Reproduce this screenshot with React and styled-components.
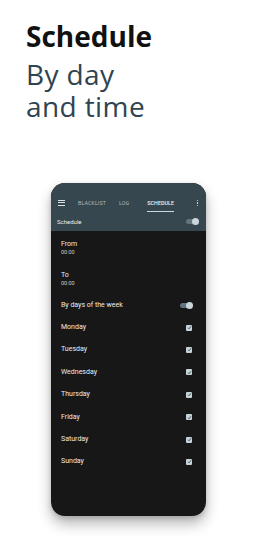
import React from 'react'
import styled, { createGlobalStyle } from 'styled-components'

const GlobalStyle = createGlobalStyle`
    html, body {
        margin:0;
        padding:0;
        background:#ffffff;
    }
    body {
        font-family: Roboto, "Noto Sans", sans-serif;
    }
`;

const Page = styled.div`
    width:256px;
    height:554px;
    overflow:hidden;
    background:#ffffff;
    display:flex;
    flex-direction:column;
`;

const Heading = styled.div`
    padding:17px 0 0 26px;
    font-family: "Open Sans", "Noto Sans", sans-serif;
`;

const Title = styled.div`
    font-size:28px;
    font-weight:700;
    color:#111111;
    line-height:38px;
`;

const Subtitle = styled.div`
    margin-top:3px;
    font-size:28px;
    font-weight:500;
    color:#2e4450;
    line-height:32px;
    letter-spacing:0.4px;
`;

const Phone = styled.div`
    margin:61px 0 0 51px;
    width:155px;
    height:333px;
    border-radius:14px;
    background:#171717;
    overflow:hidden;
    display:flex;
    flex-direction:column;
    box-shadow:0 8px 14px rgba(0,0,0,0.28), 0 2px 5px rgba(0,0,0,0.15);
`;

const Header = styled.div`
    background:#37474f;
    height:48px;
    display:flex;
    flex-direction:column;
`;

const TabBar = styled.div`
    height:31px;
    box-sizing:border-box;
    display:flex;
    align-items:flex-end;
    padding:0 6px 8px 7px;
`;

const Menu = styled.div`
    width:7px;
    display:flex;
    flex-direction:column;
    gap:1.5px;
    margin-right:13px;
    margin-bottom:0.5px;
    span {
        display:block;
        height:1px;
        background:#d8e0e3;
    }
`;

const Tab = styled.div`
    position:relative;
    font-size:5.3px;
    line-height:6px;
    color:${({active})=>active ? '#eef3f5' : '#a9b6bb'};
    font-weight:${({active})=>active ? 500 : 400};
    margin-right:${({gap})=>gap}px;
    letter-spacing:0.1px;
    &:after {
        content:'';
        display:${({active})=>active ? 'block' : 'none'};
        position:absolute;
        left:0;
        right:0;
        bottom:-6px;
        height:1.3px;
        background:#cfd9dc;
    }
`;

const Dots = styled.div`
    margin-left:auto;
    display:flex;
    flex-direction:column;
    gap:1px;
    margin-right:2px;
    span {
        width:1.3px;
        height:1.3px;
        background:#dfe6e8;
        border-radius:50%;
    }
`;

const SubBar = styled.div`
    flex:1;
    display:flex;
    align-items:center;
    justify-content:space-between;
    padding:0 8px 2px 6px;
    font-size:6px;
    color:#e6ecee;
`;

const Toggle = styled.div`
    width:12px;
    height:5px;
    border-radius:3px;
    background:#62757c;
    position:relative;
    &:after {
        content:'';
        position:absolute;
        right:-1px;
        top:-1px;
        width:7px;
        height:7px;
        border-radius:50%;
        background:#c9d7db;
    }
`;

const Body = styled.div`
    padding:1px 12px 0 10px;
    display:flex;
    flex-direction:column;
`;

const TimeBlock = styled.div`
    height:31px;
    display:flex;
    flex-direction:column;
    justify-content:center;
    color:#eeeeee;
`;

const Label = styled.div`
    font-size:7px;
    line-height:9px;
    color:#ececec;
`;

const Time = styled.div`
    font-size:5.5px;
    line-height:7px;
    color:#cfcfcf;
`;

const Row = styled.div`
    height:22.4px;
    display:flex;
    align-items:center;
    justify-content:space-between;
`;

const Check = styled.div`
    width:6px;
    height:6px;
    border-radius:1px;
    background:#c7d5da;
    margin-right:2px;
    display:flex;
    align-items:center;
    justify-content:center;
    svg { display:block; }
`;

const days = ['Monday','Tuesday','Wednesday','Thursday','Friday','Saturday','Sunday'];

const CheckBox = () => (
    <Check>
        <svg width="5" height="5" viewBox="0 0 10 10">
            <path d="M2 5.5 L4 7.5 L8 2.5" stroke="#263238" strokeWidth="1.6" fill="none"/>
        </svg>
    </Check>
)

const App = () => (
    <Page>
        <GlobalStyle/>
        <Heading>
            <Title>Schedule</Title>
            <Subtitle>By day<br/>and time</Subtitle>
        </Heading>
        <Phone>
            <Header>
                <TabBar>
                    <Menu><span/><span/><span/></Menu>
                    <Tab gap={13}>BLACKLIST</Tab>
                    <Tab gap={18}>LOG</Tab>
                    <Tab active>SCHEDULE</Tab>
                    <Dots><span/><span/><span/></Dots>
                </TabBar>
                <SubBar>
                    <span>Schedule</span>
                    <Toggle/>
                </SubBar>
            </Header>
            <Body>
                <TimeBlock>
                    <Label>From</Label>
                    <Time>00:00</Time>
                </TimeBlock>
                <TimeBlock>
                    <Label>To</Label>
                    <Time>00:00</Time>
                </TimeBlock>
                <Row>
                    <Label>By days of the week</Label>
                    <Toggle style={{marginRight:'2px'}}/>
                </Row>
                {days.map(d => (
                    <Row key={d}>
                        <Label>{d}</Label>
                        <CheckBox/>
                    </Row>
                ))}
            </Body>
        </Phone>
    </Page>
)

export default App;
